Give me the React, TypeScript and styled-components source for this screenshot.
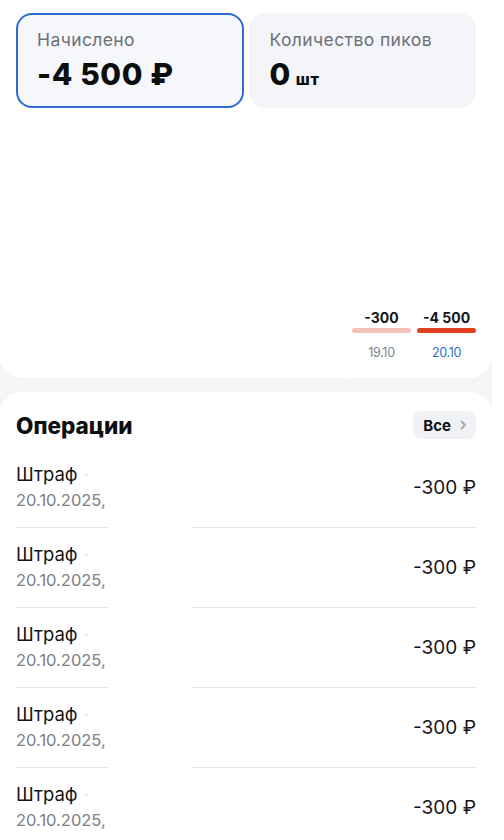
import { createGlobalStyle, styled } from 'styled-components';

const GlobalStyle = createGlobalStyle`
  html, body {
    margin: 0;
    padding: 0;
    background: #ffffff;
  }
  body {
    font-family: Inter, 'Noto Sans', sans-serif;
    color: #111214;
  }
`;

type Stat = { label: string; value: string; unit?: string; active?: boolean };

const stats: Stat[] = [
  { label: 'Начислено', value: '-4 500 ₽', active: true },
  { label: 'Количество пиков', value: '0', unit: 'шт' },
];

type Day = { amount: string; date: string; strong?: boolean };

const days: Day[] = [
  { amount: '-300', date: '19.10' },
  { amount: '-4 500', date: '20.10', strong: true },
];

const operations = Array.from({ length: 5 }, () => ({
  title: 'Штраф',
  date: '20.10.2025,',
  amount: '-300 ₽',
}));

const App: React.FC = () => {
  return (
    <Screen>
      <GlobalStyle />

      <Summary>
        <StatRow>
          {stats.map((stat) => (
            <StatCard key={stat.label} $active={stat.active}>
              <StatLabel>{stat.label}</StatLabel>
              <StatValue>
                {stat.value}
                {stat.unit && <StatUnit>{stat.unit}</StatUnit>}
              </StatValue>
            </StatCard>
          ))}
        </StatRow>

        <Chart>
          <GridLine />
          <Columns>
            {days.map((day) => (
              <Column key={day.date}>
                <BarLabel>{day.amount}</BarLabel>
                <Bar $strong={day.strong} />
                <DayLabel $strong={day.strong}>{day.date}</DayLabel>
              </Column>
            ))}
          </Columns>
        </Chart>
      </Summary>

      <Operations>
        <Header>
          <Title>Операции</Title>
          <AllButton>
            Все
            <svg width="8" height="10" viewBox="0 0 8 10" fill="none">
              <path
                d="M2.5 1.5L6 5L2.5 8.5"
                stroke="#a3a7ae"
                strokeWidth="1.8"
                strokeLinecap="round"
                strokeLinejoin="round"
              />
            </svg>
          </AllButton>
        </Header>

        <List>
          {operations.map((op, i) => (
            <Row key={i}>
              <RowText>
                <RowTitle>
                  {op.title}
                  <Dot>·</Dot>
                </RowTitle>
                <RowDate>{op.date}</RowDate>
              </RowText>
              <Amount>{op.amount}</Amount>
            </Row>
          ))}
          <Redacted />
        </List>
      </Operations>
    </Screen>
  );
};

const Screen = styled.main`
  width: 492px;
  min-height: 840px;
  background: #f4f5f7;
  display: flex;
  flex-direction: column;
  gap: 14px;
  overflow: hidden;
`;

const Summary = styled.section`
  background: #ffffff;
  border-radius: 0 0 22px 22px;
  height: 378px;
  display: flex;
  flex-direction: column;
  box-sizing: border-box;
  padding: 13px 16px 0;
`;

const StatRow = styled.div`
  display: grid;
  grid-template-columns: 1fr 1fr;
  gap: 5px;
  width: 460px;
`;

const StatCard = styled.div<{ $active?: boolean }>`
  height: 95px;
  box-sizing: border-box;
  border-radius: 16px;
  background: ${({ $active }) => ($active ? '#f6f7fb' : '#f4f5f8')};
  border: 2px solid ${({ $active }) => ($active ? '#2c6bd3' : 'transparent')};
  padding: 14px 19px 0;
  display: flex;
  flex-direction: column;
  gap: 4px;
`;

const StatLabel = styled.div`
  font-size: 17.5px;
  line-height: 22px;
  letter-spacing: 0.4px;
  color: #6c7079;
`;

const StatValue = styled.div`
  font-size: 30px;
  line-height: 38px;
  font-weight: 800;
  color: #0d0e10;
  letter-spacing: 0.6px;
`;

const StatUnit = styled.span`
  font-size: 16px;
  font-weight: 800;
  margin-left: 5px;
`;

const Chart = styled.div`
  flex: 1;
  position: relative;
  display: flex;
  justify-content: flex-end;
  align-items: flex-end;
  padding-bottom: 18px;
`;

const GridLine = styled.div`
  position: absolute;
  left: 330px;
  top: 75px;
  bottom: 0;
  width: 1px;
  background: #fafafb;
`;

const Columns = styled.div`
  display: flex;
  gap: 6px;
`;

const Column = styled.div`
  width: 59px;
  display: flex;
  flex-direction: column;
  align-items: center;
`;

const BarLabel = styled.div`
  font-size: 14px;
  line-height: 16px;
  font-weight: 700;
  color: #15161a;
`;

const Bar = styled.div<{ $strong?: boolean }>`
  width: 100%;
  height: 5px;
  border-radius: 3px;
  margin-top: 2px;
  background: ${({ $strong }) => ($strong ? '#e0401f' : '#f3c1b7')};
`;

const DayLabel = styled.div<{ $strong?: boolean }>`
  margin-top: 13px;
  font-size: 12.5px;
  line-height: 14px;
  letter-spacing: -0.3px;
  color: ${({ $strong }) => ($strong ? '#2f6fd0' : '#7d828a')};
`;

const Operations = styled.section`
  flex: 1;
  background: #ffffff;
  border-radius: 22px 22px 0 0;
  padding: 18px 16px 0;
  display: flex;
  flex-direction: column;
`;

const Header = styled.div`
  display: flex;
  align-items: center;
  justify-content: space-between;
  height: 30px;
`;

const Title = styled.h2`
  margin: 0;
  font-size: 22.5px;
  font-weight: 800;
  color: #0d0e10;
`;

const AllButton = styled.button`
  display: flex;
  align-items: center;
  gap: 8px;
  height: 28px;
  padding: 0 9px 0 10px;
  border: none;
  border-radius: 8px;
  background: #f1f2f5;
  font-family: inherit;
  font-size: 15px;
  font-weight: 700;
  color: #111214;
`;

const List = styled.div`
  position: relative;
  margin-top: 8px;
  display: flex;
  flex-direction: column;
`;

const Row = styled.div`
  height: 80px;
  box-sizing: border-box;
  display: flex;
  align-items: center;
  justify-content: space-between;
  border-bottom: 1px solid #e7e8eb;
  padding-bottom: 2px;
`;

const RowText = styled.div`
  display: flex;
  flex-direction: column;
  gap: 3px;
`;

const RowTitle = styled.div`
  font-size: 18.5px;
  line-height: 24px;
  color: #141518;
`;

const Dot = styled.span`
  margin-left: 6px;
  color: #e4e5e8;
`;

const RowDate = styled.div`
  font-size: 16.5px;
  line-height: 22px;
  color: #7c8088;
`;

const Amount = styled.div`
  font-size: 19px;
  margin-top: 2px;
  color: #141518;
`;

const Redacted = styled.div`
  position: absolute;
  left: 92px;
  top: 40px;
  bottom: 0;
  width: 84px;
  background: #ffffff;
`;

export default App;
